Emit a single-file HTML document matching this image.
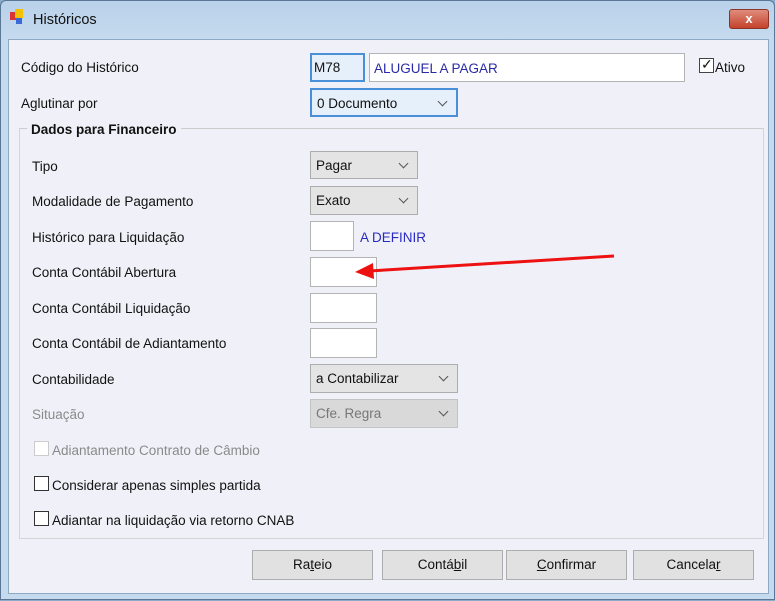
<!DOCTYPE html><html><head><meta charset="utf-8"><style>
*{box-sizing:border-box}body{margin:0;width:775px;height:600px;overflow:hidden;font-family:"Liberation Sans",sans-serif;font-size:13.5px;color:#111;background:#8aaccb}
.win{position:absolute;left:0;top:0;width:775px;height:600px;background:linear-gradient(#b9d1ea,#c5daee 38px);border:1px solid #5a7896;border-radius:6px 6px 0 0}
.body{position:absolute;left:7px;top:38px;width:761px;height:555px;background:#f0f1f8;border:1px solid #8ea9c4}
.a{position:absolute;white-space:nowrap}
.box{position:absolute;background:#fff;border:1px solid #b4b4b4}
.cb{position:absolute;background:#e4e4e4;border:1px solid #adadad;padding:6px 5px;font-size:13.5px}
.cb:after{content:"";position:absolute;right:10px;top:8px;width:6px;height:6px;border-right:1px solid #555;border-bottom:1px solid #555;transform:rotate(45deg)}
.chk{position:absolute;width:15px;height:15px;border:1px solid #333;background:#fff}
.btn{position:absolute;top:549px;height:30px;width:121px;background:#e1e1e1;border:1px solid #adadad;text-align:center;line-height:28px;font-size:13.5px}
</style></head><body><div class="win">
<div class="a" style="left:9px;top:11px;width:8px;height:8px;background:#d33"></div>
<div class="a" style="left:14px;top:8px;width:8px;height:9px;background:#f2c200"></div>
<div class="a" style="left:15px;top:17px;width:6px;height:6px;background:#3a6ad6"></div>
<div class="a" style="left:32px;top:11px;font-size:14.5px">Históricos</div>
<div class="a" style="left:728px;top:8px;width:40px;height:20px;background:linear-gradient(#e08c7c,#c4422c);border:1px solid #8a3528;border-radius:3px;color:#fff;font-weight:bold;text-align:center;line-height:18px;font-size:13px">x</div>
<div class="body"></div>
<div class="a" style="left:18px;top:127px;width:745px;height:411px;border:1px solid #d5d5d5;border-top-color:#ccc"></div>
<div class="a" style="left:26px;top:121px;background:#f0f1f8;padding:0 4px;font-weight:bold;font-size:13.5px">Dados para Financeiro</div>
<div class="a" style="left:20px;top:59px">Código do Histórico</div>
<div class="a" style="left:20px;top:95px">Aglutinar por</div>
<div class="box" style="left:309px;top:52px;width:55px;height:29px;background:#e6f0fa;border:2px solid #4a90d8;padding:5px 2px">M78</div>
<div class="box" style="left:368px;top:52px;width:316px;height:29px;padding:7px 4px;color:#2a2aa8">ALUGUEL A PAGAR</div>
<div class="chk" style="left:698px;top:57px;border-color:#444"></div><div class="a" style="left:700px;top:55px;font-size:14px">✓</div>
<div class="a" style="left:714px;top:59px">Ativo</div>
<div class="cb" style="left:309px;top:87px;width:148px;height:29px;background:#e6f0fa;border:2px solid #4a90d8">0 Documento</div>
<div class="a" style="left:31px;top:158px">Tipo</div>
<div class="a" style="left:31px;top:193px">Modalidade de Pagamento</div>
<div class="a" style="left:31px;top:229px">Histórico para Liquidação</div>
<div class="a" style="left:31px;top:264px">Conta Contábil Abertura</div>
<div class="a" style="left:31px;top:300px">Conta Contábil Liquidação</div>
<div class="a" style="left:31px;top:335px">Conta Contábil de Adiantamento</div>
<div class="a" style="left:31px;top:371px">Contabilidade</div>
<div class="a" style="left:31px;top:406px;color:#8a8a8a">Situação</div>
<div class="cb" style="left:309px;top:150px;width:108px;height:28px">Pagar</div>
<div class="cb" style="left:309px;top:185px;width:108px;height:29px">Exato</div>
<div class="box" style="left:309px;top:220px;width:44px;height:30px"></div>
<div class="a" style="left:359px;top:229px;color:#2a2ac0">A DEFINIR</div>
<div class="box" style="left:309px;top:256px;width:67px;height:30px"></div>
<div class="box" style="left:309px;top:292px;width:67px;height:30px"></div>
<div class="box" style="left:309px;top:327px;width:67px;height:30px"></div>
<div class="cb" style="left:309px;top:363px;width:148px;height:29px">a Contabilizar</div>
<div class="cb" style="left:309px;top:398px;width:148px;height:29px;background:#d9d9d9;border-color:#c4c4c4;color:#777">Cfe. Regra</div>
<div class="chk" style="left:33px;top:440px;border-color:#ccc"></div><div class="a" style="left:51px;top:442px;color:#8a8a8a">Adiantamento Contrato de Câmbio</div>
<div class="chk" style="left:33px;top:475px"></div><div class="a" style="left:51px;top:477px">Considerar apenas simples partida</div>
<div class="chk" style="left:33px;top:510px"></div><div class="a" style="left:51px;top:512px">Adiantar na liquidação via retorno CNAB</div>
<div class="btn" style="left:251px">Ra<u>t</u>eio</div>
<div class="btn" style="left:381px">Contá<u>b</u>il</div>
<div class="btn" style="left:505px"><u>C</u>onfirmar</div>
<div class="btn" style="left:632px">Cancela<u>r</u></div>
<svg class="a" style="left:0;top:0" width="775" height="600"><line x1="613" y1="255" x2="368" y2="270" stroke="#ee1111" stroke-width="3"/><polygon points="354,271 372,262 373,278" fill="#ee1111"/></svg>
</div></body></html>
